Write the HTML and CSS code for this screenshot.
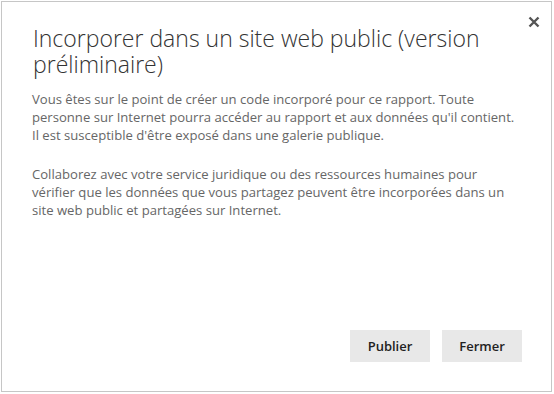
FILE: index.html
```html
<!DOCTYPE html>
<html lang="fr">
<head>
    <meta charset="UTF-8">
    <title>Incorporer dans un site web public</title>
    <link rel="stylesheet" href="styles.css">
</head>
<body>
    <!-- Embed dialog -->
    <div class="dialog">
        <button class="close-btn" aria-label="Fermer">
            <svg width="12" height="12" viewBox="0 0 12 12">
                <path d="M1.5 1.5 L10.5 10.5 M10.5 1.5 L1.5 10.5" stroke="#555" stroke-width="2.4" fill="none"/>
            </svg>
        </button>
        <h1 class="dialog-title">Incorporer dans un site web public (version préliminaire)</h1>
        <div class="dialog-body">
            <p>Vous êtes sur le point de créer un code incorporé pour ce rapport. Toute personne sur Internet pourra accéder au rapport et aux données qu'il contient. Il est susceptible d'être exposé dans une galerie publique.</p>
            <p>Collaborez avec votre service juridique ou des ressources humaines pour vérifier que les données que vous partagez peuvent être incorporées dans un site web public et partagées sur Internet.</p>
        </div>
        <div class="dialog-actions">
            <button class="action-btn">Publier</button>
            <button class="action-btn">Fermer</button>
        </div>
    </div>
</body>
</html>
```

FILE: styles.css
```css
* {
    margin: 0;
    padding: 0;
    box-sizing: border-box;
}
body {
    font-family: 'Open Sans', 'Noto Sans', sans-serif;
    background: #fff;
    width: 554px;
    height: 394px;
    padding: 1px 2px 2px 1px;
}
.dialog {
    position: relative;
    height: 391px;
    border: 1px solid #c6c6c6;
    background: white;
    display: flex;
    flex-direction: column;
    padding: 23px 29px 29px 30px;
}
.close-btn {
    position: absolute;
    top: 13px;
    right: 10px;
    width: 14px;
    height: 14px;
    border: none;
    background: none;
    display: flex;
    align-items: center;
    justify-content: center;
    cursor: pointer;
}
.dialog-title {
    font-weight: 300;
    font-size: 23px;
    line-height: 26px;
    color: #333;
    padding-left: 1px;
    padding-right: 40px;
    margin-bottom: 13px;
}
.dialog-body {
    flex: 1;
    width: 488px;
    font-size: 13.1px;
    line-height: 18px;
    color: #666;
}
.dialog-body p {
    margin-bottom: 21px;
}
.dialog-actions {
    display: flex;
    justify-content: flex-end;
    gap: 12px;
}
.action-btn {
    width: 80px;
    height: 32px;
    border: none;
    background: #e8e8e8;
    color: #222;
    font-family: inherit;
    font-size: 13px;
    font-weight: 600;
    cursor: pointer;
}
```
